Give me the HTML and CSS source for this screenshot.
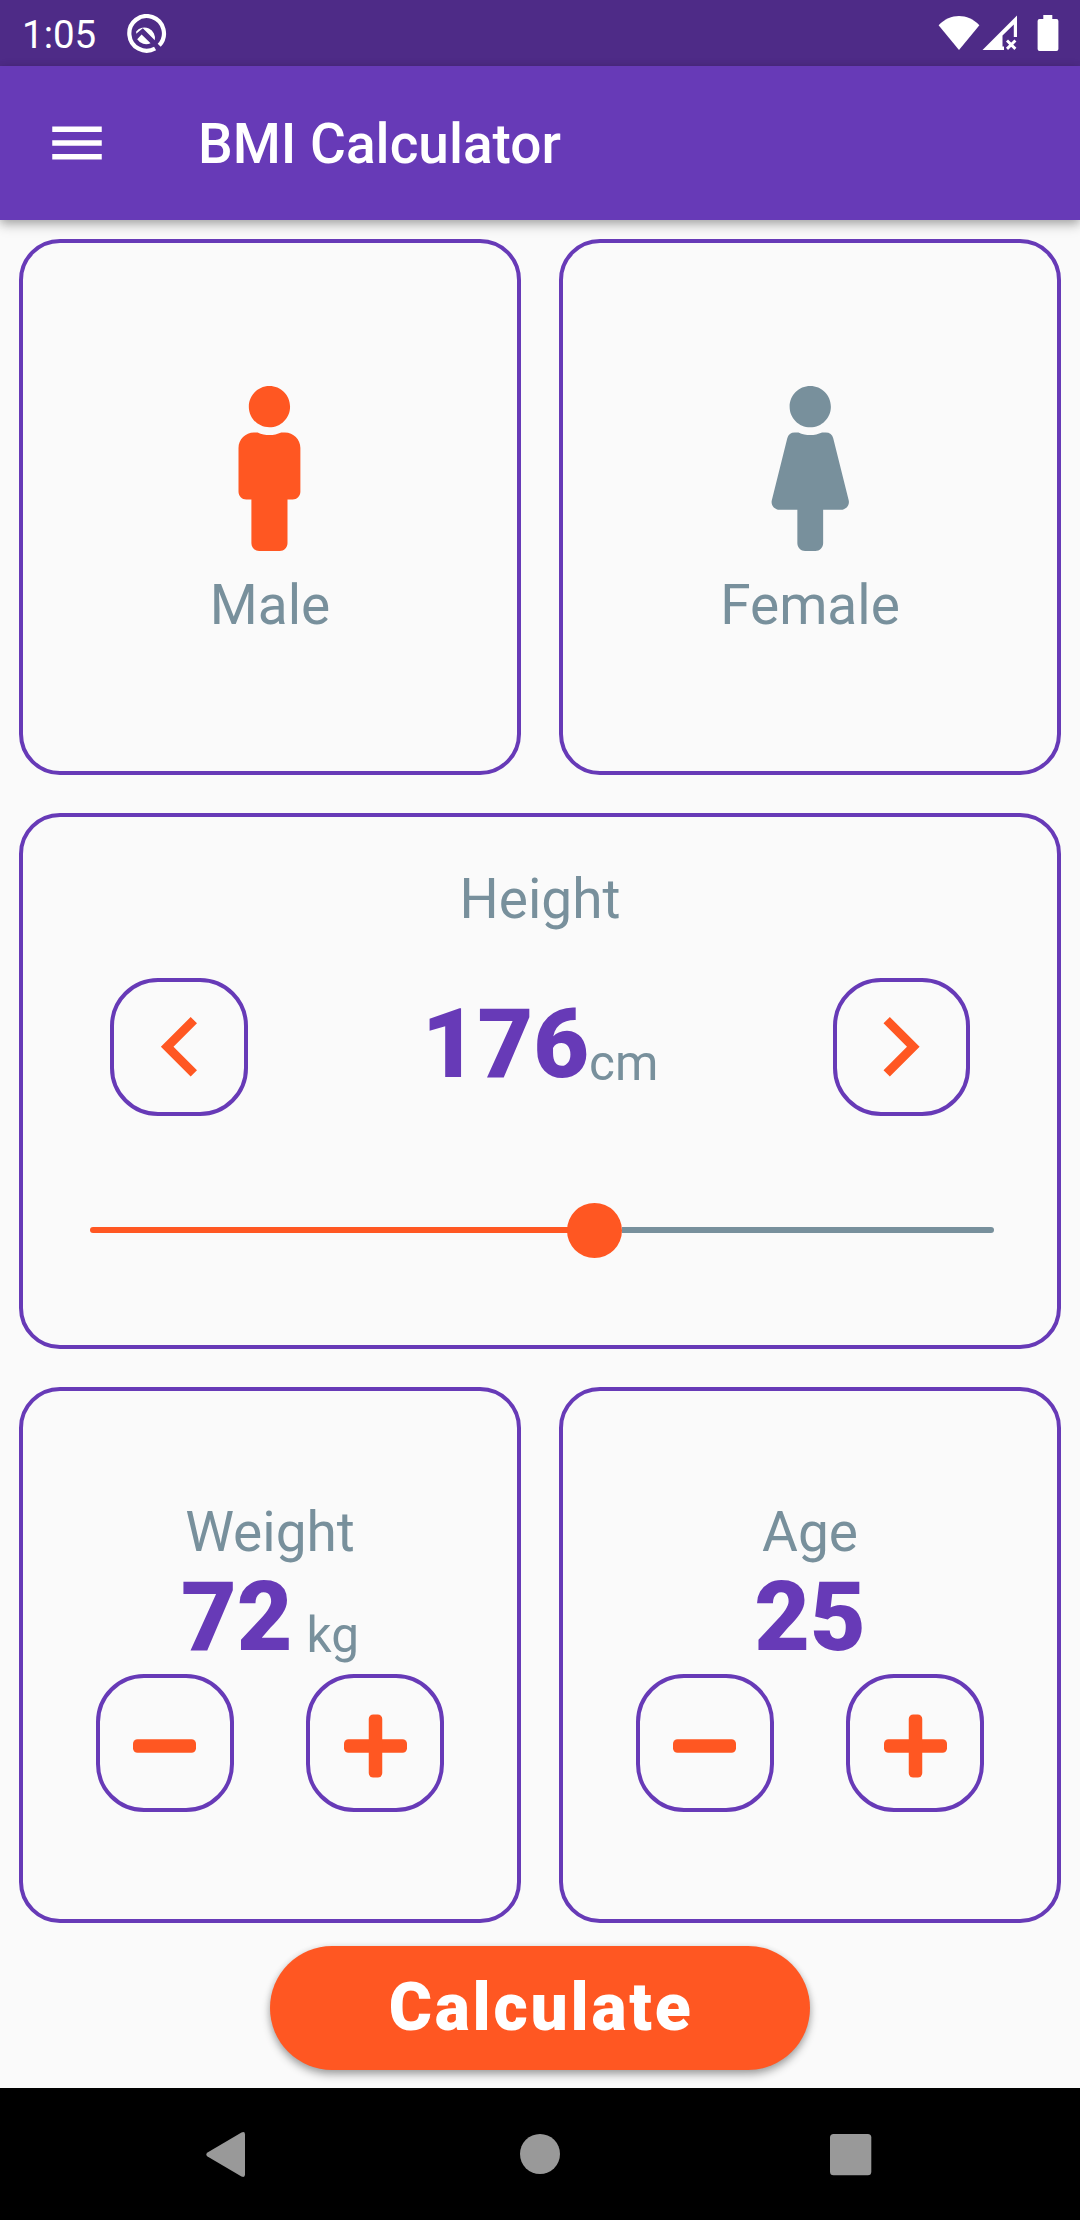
FILE: index.html
```html
<!DOCTYPE html>
<html lang="en">
<head>
<meta charset="utf-8">
<title>BMI Calculator</title>
<link rel="stylesheet" href="styles.css">
</head>
<body>
<div class="screen">
  <div class="status-bar">
    <span class="clock">1:05</span>
    <svg class="status-app" viewBox="0 0 40 40">
      <path d="M28.100 34.500A17.300 17.300 0 1 1 32.200 31.300" fill="none" stroke="#fff" stroke-width="4.200"/>
      <path d="M9.200 17.500A10.600 10.600 0 0 1 27.800 26.300L15.800 14.300L9.200 19.800zM10.200 25.200L14.600 20.600L23.600 29.200A10.600 10.600 0 0 1 10.200 25.200z" fill="#fff"/>
    </svg>
    <div class="status-icons">
      <svg class="wifi" viewBox="0 0 42 36"><path d="M0.600 10.200C12.500-2 29.500-2 41.400 10.200L21 35z" fill="#fff"/></svg>
      <svg class="signal" viewBox="0 0 36 36">
        <path d="M35 0.500V22h-3.200V9.500L20.500 20.500v11H22V35H0.500z" fill="#fff"/>
        <path d="M25 25.500l8.400 8.400M33.400 25.500l-8.400 8.400" stroke="#fff" stroke-width="2.900"/>
      </svg>
      <svg class="battery" viewBox="0 0 22 36"><path d="M6.300 0h9v4H19.500a2 2 0 0 1 1.900 2V34a2 2 0 0 1-2 2H2.600a2 2 0 0 1-2-2V6a2 2 0 0 1 2-2h3.700z" fill="#fff"/></svg>
    </div>
  </div>

  <header class="app-bar">
    <svg class="menu" viewBox="0 0 24 24"><path d="M3 18h18v-2H3v2zm0-5h18v-2H3v2zm0-7v2h18V6H3z" fill="#fff"/></svg>
    <h1 class="title">BMI Calculator</h1>
  </header>

  <main class="content">
    <section class="row">
      <div class="card gender selected">
        <svg class="person" viewBox="0 0 256 512"><path transform="translate(29.500)" d="M96 0c35.346 0 64 28.654 64 64s-28.654 64-64 64-64-28.654-64-64S60.654 0 96 0m48 144h-11.360c-22.711 10.443-49.590 10.894-73.280 0H48c-26.510 0-48 21.490-48 48v136c0 13.255 10.745 24 24 24h16v136c0 13.255 10.745 24 24 24h64c13.255 0 24-10.745 24-24V352h16c13.255 0 24-10.745 24-24V192c0-26.510-21.490-48-48-48z"/></svg>
        <span class="label">Male</span>
      </div>
      <div class="card gender">
        <svg class="person" viewBox="0 0 256 512"><path d="M128 0c35.346 0 64 28.654 64 64s-28.654 64-64 64c-35.346 0-64-28.654-64-64S92.654 0 128 0m119.283 354.179l-48-192A24 24 0 0 0 176 144h-11.360c-22.711 10.443-49.590 10.894-73.280 0H80a24 24 0 0 0-23.283 18.179l-48 192C4.935 369.305 16.383 384 32 384h56v104c0 13.255 10.745 24 24 24h32c13.255 0 24-10.745 24-24V384h56c15.591 0 27.071-14.671 23.283-29.821z"/></svg>
        <span class="label">Female</span>
      </div>
    </section>

    <section class="row">
      <div class="card height">
        <span class="label">Height</span>
        <div class="stepper">
          <button class="step"><svg class="chevron" viewBox="0 0 24 24"><path d="M18.120 4.120L10.240 12l7.880 7.880L16 22 6 12 16 2z"/></svg></button>
          <div class="value"><span class="number">176</span><span class="unit">cm</span></div>
          <button class="step"><svg class="chevron" viewBox="0 0 24 24"><path d="M5.880 4.120L13.760 12l-7.880 7.880L8 22l10-10L8 2z"/></svg></button>
        </div>
        <div class="slider">
          <div class="track-active" style="width: 504.500px"></div>
          <div class="thumb"></div>
          <div class="track-rest"></div>
        </div>
      </div>
    </section>

    <section class="row">
      <div class="card counter">
        <span class="label">Weight</span>
        <div class="value"><span class="number">72</span><span class="unit spaced">kg</span></div>
        <div class="buttons">
          <button class="step"><svg class="sign" viewBox="0 0 448 512"><rect y="208" width="448" height="96" rx="32"/></svg></button>
          <button class="step"><svg class="sign" viewBox="0 0 448 512"><rect y="208" width="448" height="96" rx="32"/><rect x="176" y="32" width="96" height="448" rx="32"/></svg></button>
        </div>
      </div>
      <div class="card counter">
        <span class="label">Age</span>
        <div class="value"><span class="number">25</span></div>
        <div class="buttons">
          <button class="step"><svg class="sign" viewBox="0 0 448 512"><rect y="208" width="448" height="96" rx="32"/></svg></button>
          <button class="step"><svg class="sign" viewBox="0 0 448 512"><rect y="208" width="448" height="96" rx="32"/><rect x="176" y="32" width="96" height="448" rx="32"/></svg></button>
        </div>
      </div>
    </section>

    <button class="calculate">Calculate</button>
  </main>

  <nav class="nav-bar">
    <svg class="nav-icon" viewBox="0 0 60 60"><path d="M41.500 8.500Q45 7 45 10.500V50.500Q45 54 41.500 52.500L7.500 32.500Q5 30.500 7.500 28.500z"/></svg>
    <svg class="nav-icon" viewBox="0 0 60 60"><circle cx="30" cy="30" r="20"/></svg>
    <svg class="nav-icon" viewBox="0 0 60 60"><rect x="10" y="10" width="41.300" height="41.300" rx="3.500"/></svg>
  </nav>
</div>
</body>
</html>
```

FILE: styles.css
```css
* {
  box-sizing: border-box;
}

body {
  margin: 0;
  background: #fafafa;
  font-family: Roboto, sans-serif;
}

.screen {
  display: flex;
  flex-direction: column;
  width: 1080px;
  height: 2220px;
  overflow: hidden;
}

svg {
  display: block;
  flex: none;
}

button {
  padding: 0;
  font-family: inherit;
}

.status-bar {
  display: flex;
  height: 66px;
  padding: 0 21px 0 22px;
  background: #4e2b87;
  color: #fff;
}

.clock {
  width: 105px;
  margin-top: 2px;
  font-size: 38.5px;
  line-height: 66px;
}

.status-app {
  width: 40px;
  height: 40px;
  margin-top: 13.5px;
}

.status-icons {
  display: flex;
  margin: 15px 0 0 auto;
}

.wifi {
  width: 42px;
  height: 36px;
}

.signal {
  width: 36px;
  height: 36px;
  margin-left: 2px;
}

.battery {
  width: 22px;
  height: 36px;
  margin-left: 19px;
}

.app-bar {
  display: flex;
  align-items: center;
  height: 154px;
  padding-left: 44px;
  background: #673ab7;
  color: #fff;
  box-shadow: 0 5px 11px rgba(0, 0, 0, 0.26), 0 2px 8px rgba(0, 0, 0, 0.12);
  z-index: 1;
}

.menu {
  width: 66px;
  height: 66px;
}

.title {
  margin: 2px 0 0 88px;
  font-size: 55px;
  font-weight: 500;
  line-height: 64px;
}

.content {
  display: flex;
  flex: 1;
  flex-direction: column;
  align-items: center;
}

.row {
  display: flex;
  gap: 38.5px;
  width: 1080px;
  height: 574.1px;
  padding: 19.25px;
}

.card {
  display: flex;
  flex: 1;
  flex-direction: column;
  align-items: center;
  border: 4px solid #673ab7;
  border-radius: 41px;
}

.label {
  color: #78909c;
  font-size: 55px;
  line-height: 64px;
}

.gender {
  padding-top: 142.5px;
}

.person {
  width: 82.5px;
  height: 165px;
  margin-bottom: 22px;
  fill: #78909c;
}

.selected .person {
  fill: #ff5722;
}

.height {
  padding-top: 50px;
}

.stepper {
  display: flex;
  justify-content: space-between;
  width: 860px;
  margin-top: 47px;
}

.value {
  display: flex;
  align-items: flex-end;
}

.stepper .value {
  height: 123px;
}

.number {
  color: #673ab7;
  font-size: 96.25px;
  font-weight: 900;
  line-height: 113px;
}

.unit {
  color: #78909c;
  font-size: 49.5px;
  line-height: 58px;
  padding-bottom: 9px;
}

.spaced {
  margin-left: 14px;
  padding-bottom: 10px;
}

.step {
  display: flex;
  align-items: center;
  justify-content: center;
  width: 137.5px;
  height: 137.5px;
  border: 4px solid #673ab7;
  border-radius: 48px;
  background: none;
}

.chevron {
  width: 71.5px;
  height: 71.5px;
  fill: #ff5722;
}

.sign {
  width: 63px;
  height: 72px;
  margin-top: 5px;
  fill: #ff5722;
}

.slider {
  display: flex;
  align-items: center;
  width: 904px;
  height: 55px;
  margin: 87px 0 0 3px;
}

.track-active {
  height: 6px;
  margin-right: -27.5px;
  border-radius: 3px;
  background: #ff5722;
}

.thumb {
  flex: none;
  width: 55px;
  height: 55px;
  border-radius: 50%;
  background: #ff5722;
}

.track-rest {
  flex: 1;
  height: 6px;
  border-radius: 0 3px 3px 0;
  background: #78909c;
}

.counter {
  padding-top: 109px;
}

.counter .value {
  height: 110px;
}

.buttons {
  display: flex;
  justify-content: space-evenly;
  width: 100%;
}

.calculate {
  width: 540px;
  height: 124px;
  margin-top: 4px;
  padding-left: 2px;
  border: 0;
  border-radius: 62px;
  background: #ff5722;
  box-shadow: 0 5px 9px rgba(0, 0, 0, 0.3), 0 1px 6px rgba(0, 0, 0, 0.12);
  color: #fff;
  font-size: 66px;
  font-weight: 900;
  letter-spacing: 2.75px;
  line-height: 78px;
}

.nav-bar {
  display: flex;
  align-items: center;
  justify-content: space-between;
  height: 132px;
  padding: 0 200px;
  background: #000;
  z-index: 1;
}

.nav-icon {
  width: 60px;
  height: 60px;
  fill: #999;
}
```
